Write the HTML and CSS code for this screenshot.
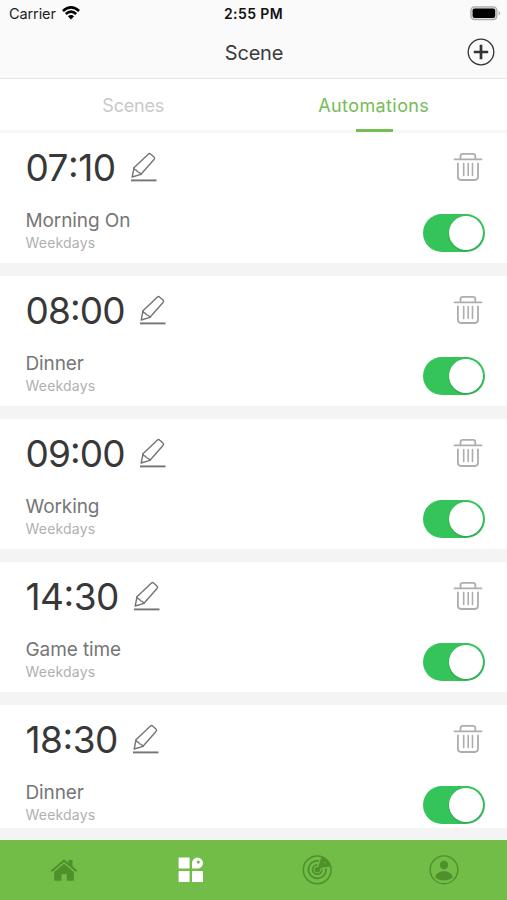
FILE: index.html
```html
<!DOCTYPE html>
<html lang="en">
<head>
<meta charset="utf-8">
<title>Scene</title>
<link rel="stylesheet" href="styles.css">
</head>
<body>
<svg width="0" height="0" class="defs">
  <symbol id="pencil" viewBox="0 0 28 30">
    <g fill="none" stroke="#747474" stroke-width="1.4" stroke-linejoin="round" stroke-linecap="round">
      <path d="M4 15.8 18.2 2.2Q19.5 1 20.8 2.2L24 5Q25.2 6.2 24 7.5L11 22.3 2.2 25Z"/>
      <path d="M4 15.8Q3.8 18.2 6.5 18.2 7 20.6 9.3 20.4L11 22.3"/>
    </g>
    <path d="M1 28.4H26.5" stroke="#747474" stroke-width="1.9"/>
  </symbol>
  <symbol id="trash" viewBox="0 0 30 30">
    <g fill="none" stroke="#adadad" stroke-width="1.8" stroke-linecap="round" stroke-linejoin="round">
      <path d="M1.5 7.3H28.5M7.5 7V4.2Q7.5 1.9 9.8 1.9H20Q22.3 1.9 22.3 4.2V7"/>
      <path d="M4.9 11.5V24.8Q4.9 28 8.1 28H21.8Q25 28 25 24.8V11.5"/>
      <path d="M10.7 11.6V23.4M15.2 11.6V23.4M19.5 11.6V23.4" stroke-width="1.6"/>
    </g>
  </symbol>
</svg>
<div class="app">
  <header class="header">
    <div class="status">
      <div class="carrier">Carrier
        <svg width="18" height="14" viewBox="0 0 18 14" fill="none" stroke="#000" stroke-width="2.5">
          <path d="M.9 5Q9-2.3 17.1 5M3.8 8Q9 3.3 14.2 8"/>
          <path d="M5.9 10.2Q9 7.6 12.1 10.2L9 13.6Z" fill="#000" stroke="none"/>
        </svg>
      </div>
      <div class="clock">2:55 PM</div>
      <svg class="battery" width="31" height="15" viewBox="0 0 31 15">
        <rect x=".9" y=".9" width="26" height="12.8" rx="3.6" fill="#ddd" stroke="#aaa" stroke-width="1.3"/>
        <rect x="2.6" y="2.6" width="22.6" height="9.4" rx="2" fill="#000"/>
        <path d="M28.7 5Q31.3 7.3 28.7 9.6Z" fill="#aaa"/>
      </svg>
    </div>
    <div class="titlebar">
      <h1>Scene</h1>
      <svg class="add" width="28" height="28" viewBox="0 0 28 28" fill="none" stroke="#333">
        <circle cx="14" cy="14" r="12.8" stroke-width="1.3"/>
        <path d="M14 6.8V21.2M6.8 14H21.2" stroke-width="2.7"/>
      </svg>
    </div>
  </header>
  <nav class="tabs">
    <div class="tab">Scenes</div>
    <div class="tab active">Automations</div>
  </nav>
  <main class="list">
    <section class="card">
      <div class="top"><span class="time loose">07<b>:</b>10</span><svg class="pencil"><use href="#pencil"/></svg><svg class="trash"><use href="#trash"/></svg></div>
      <div class="bottom"><div><div class="name">Morning On</div><div class="days">Weekdays</div></div><div class="toggle"><i></i></div></div>
    </section>
    <section class="card">
      <div class="top"><span class="time">08<b>:</b>00</span><svg class="pencil"><use href="#pencil"/></svg><svg class="trash"><use href="#trash"/></svg></div>
      <div class="bottom"><div><div class="name">Dinner</div><div class="days">Weekdays</div></div><div class="toggle"><i></i></div></div>
    </section>
    <section class="card">
      <div class="top"><span class="time">09<b>:</b>00</span><svg class="pencil"><use href="#pencil"/></svg><svg class="trash"><use href="#trash"/></svg></div>
      <div class="bottom"><div><div class="name">Working</div><div class="days">Weekdays</div></div><div class="toggle"><i></i></div></div>
    </section>
    <section class="card">
      <div class="top"><span class="time loose">14<b>:</b>30</span><svg class="pencil"><use href="#pencil"/></svg><svg class="trash"><use href="#trash"/></svg></div>
      <div class="bottom"><div><div class="name">Game time</div><div class="days">Weekdays</div></div><div class="toggle"><i></i></div></div>
    </section>
    <section class="card">
      <div class="top"><span class="time loose">18<b>:</b>30</span><svg class="pencil"><use href="#pencil"/></svg><svg class="trash"><use href="#trash"/></svg></div>
      <div class="bottom"><div><div class="name">Dinner</div><div class="days">Weekdays</div></div><div class="toggle"><i></i></div></div>
    </section>
  </main>
  <footer class="tabbar">
    <div class="item">
      <svg class="home" width="30" height="30" viewBox="0 0 30 30" fill="#4f902d">
        <path d="M1.8 15.5 15 4.2 19.5 8V5H23.5V11.2L28.3 15.5 27 17.1 15 6.9 3.2 17.1Z"/>
        <path d="M15 8.7 24.9 17V25.7H17.8V19.3H12.5V25.7H5.2V17Z"/>
      </svg>
    </div>
    <div class="item">
      <svg width="30" height="30" viewBox="0 0 30 30" fill="#fff">
        <rect x="3.6" y="2.6" width="11" height="11" rx=".6"/>
        <rect x="3.6" y="16" width="11" height="11" rx=".6"/>
        <rect x="17" y="16" width="11" height="11" rx=".6"/>
        <path fill-rule="evenodd" d="M17 13.6V8.1A5.5 5.5 0 1 1 22.5 13.6ZM23.3 5.5A1.6 1.6 0 1 0 23.3 8.7A1.6 1.6 0 1 0 23.3 5.5Z"/>
      </svg>
    </div>
    <div class="item">
      <svg width="30" height="30" viewBox="0 0 30 30" fill="none" stroke="#4f902d" stroke-width="1.7">
        <circle cx="15.2" cy="14.8" r="13.9" stroke-width="1.5"/>
        <path d="M17 6A8.8 8.8 0 1 0 24 13.4M15.4 9.9A4.7 4.7 0 1 0 20 14.4" />
        <path d="M15 15.6 19.6 1.6A13.8 13.8 0 0 1 28.7 11.6L20.5 12.4Z" fill="#4f902d" stroke="none"/>
        <circle cx="15.4" cy="14.8" r="2.7" fill="#4f902d" stroke="none"/>
        <circle cx="23" cy="7.6" r=".7" fill="#71bd48" stroke="none"/>
      </svg>
    </div>
    <div class="item">
      <svg width="30" height="30" viewBox="0 0 30 30" fill="#4f902d">
        <circle cx="15" cy="14.8" r="13.9" fill="none" stroke="#4f902d" stroke-width="1.4"/>
        <circle cx="15" cy="10" r="4.2"/>
        <path d="M6.2 21.9C8.3 14.5 21.7 14.5 23.8 21.9 20 26.5 10 26.5 6.2 21.9Z"/>
      </svg>
    </div>
  </footer>
</div>
</body>
</html>
```
FILE: styles.css
```css
* { box-sizing: border-box; }
body { margin: 0; font-family: Inter, "Liberation Sans", sans-serif; background: #f4f4f4; }
svg { display: block; flex: none; }
.defs { position: absolute; }
.app { width: 507px; height: 900px; display: flex; flex-direction: column; overflow: hidden; }

.header { height: 79px; background: #fafafa; border-bottom: 1px solid #e6e6e6; flex: none; }
.status { height: 28px; display: grid; grid-template-columns: 1fr auto 1fr; align-items: center; padding: 0 6px 2px 9px; }
.carrier { display: flex; align-items: center; gap: 6px; font-size: 14.5px; color: #222; letter-spacing: -0.1px; }
.carrier svg { margin-top: -1px; }
.clock { font-size: 14px; font-weight: 600; color: #111; letter-spacing: 0.4px; margin-left: -3px; }
.battery { justify-self: end; }
.titlebar { height: 50px; display: grid; grid-template-columns: 1fr auto 1fr; align-items: center; padding-right: 12px; }
.titlebar h1 { grid-column: 2; margin: 0 0 0 13px; font-size: 20px; line-height: 24px; font-weight: 400; color: #3a3a3a; letter-spacing: -0.2px; }
.add { justify-self: end; margin-top: -2px; }

.tabs { height: 54px; flex: none; display: flex; background: #fff; border-bottom: 3px solid #f7f7f7; padding: 0 13px; }
.tab { flex: 1; text-align: center; font-size: 18px; line-height: 53px; color: #c9c9c9; position: relative; letter-spacing: -0.2px; }
.tab.active { color: #75bb56; letter-spacing: 0.4px; }
.tab.active::after { content: ""; position: absolute; left: 50%; bottom: -2px; width: 37px; height: 3px; margin-left: -18px; background: #75bb56; }

.list { height: 695px; flex: none; overflow: hidden; display: flex; flex-direction: column; gap: 13px; }
.card { height: 130px; flex: none; background: #fff; padding: 13px 22px 0 25.5px; }
.top { height: 42px; display: flex; align-items: center; }
.time { font-size: 37px; line-height: 42px; padding-top: 1px; color: #383838; letter-spacing: -0.9px; }
.time.loose { letter-spacing: -0.5px; }
.time b { display: inline-block; font-weight: 400; transform: translateY(-4px); }
.pencil { width: 28px; height: 30px; margin-left: 14px; }
.trash { width: 30px; height: 30px; margin-left: auto; margin-right: 2px; }
.bottom { display: flex; justify-content: space-between; }
.name { margin-top: 21px; font-size: 19px; line-height: 24px; color: #767676; letter-spacing: -0.1px; }
.days { font-size: 14px; line-height: 20px; color: #b0b0b0; letter-spacing: 0.2px; }
.toggle { width: 62.5px; height: 38px; margin-top: 25.5px; border-radius: 19px; background: #34c45a; padding: 2px; display: flex; justify-content: flex-end; }
.toggle i { width: 34px; height: 34px; border-radius: 50%; background: #fff; box-shadow: 0 1px 2px rgba(0, 0, 0, .2); }

.tabbar { height: 60px; margin-top: auto; flex: none; display: flex; background: #71bd48; }
.item { flex: 1; display: flex; align-items: center; justify-content: center; }
.home { margin-left: 2px; margin-top: -1px; }
```
